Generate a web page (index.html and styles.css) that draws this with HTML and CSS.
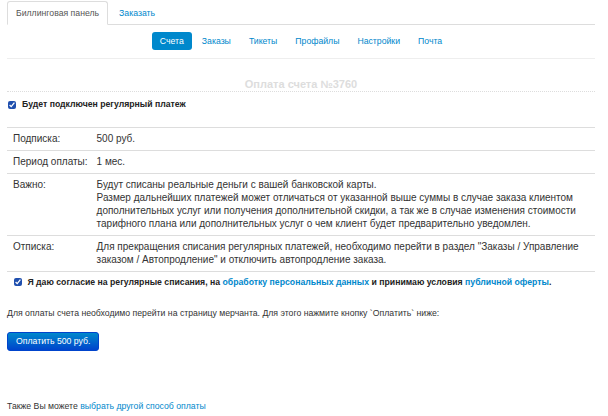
FILE: index.html
```html
<!DOCTYPE html>
<html lang="ru">
<head>
  <meta charset="UTF-8" />
  <meta name="viewport" content="width=device-width, initial-scale=1.0" />
  <title>Оплата счета №3760</title>
  <link rel="stylesheet" href="styles.css">
</head>
<body>
  <div class="page">
    <ul class="tabs">
      <li class="active"><a href="#">Биллинговая панель</a></li>
      <li><a href="#">Заказать</a></li>
    </ul>

    <ul class="pills">
      <li class="active"><a href="#">Счета</a></li>
      <li><a href="#">Заказы</a></li>
      <li><a href="#">Тикеты</a></li>
      <li><a href="#">Профайлы</a></li>
      <li><a href="#">Настройки</a></li>
      <li><a href="#">Почта</a></li>
    </ul>

    <hr class="divider">

    <h3 class="title">Оплата счета №3760</h3>

    <label class="check">
      <input type="checkbox" checked> Будет подключен регулярный платеж
    </label>

    <table class="info">
      <tr>
        <td class="key">Подписка:</td>
        <td>500 руб.</td>
      </tr>
      <tr>
        <td class="key">Период оплаты:</td>
        <td>1 мес.</td>
      </tr>
      <tr>
        <td class="key">Важно:</td>
        <td>Будут списаны реальные деньги с вашей банковской карты.<br>
          Размер дальнейших платежей может отличаться от указанной выше суммы в случае заказа клиентом
          дополнительных услуг или получения дополнительной скидки, а так же в случае изменения стоимости
          тарифного плана или дополнительных услуг о чем клиент будет предварительно уведомлен.</td>
      </tr>
      <tr>
        <td class="key">Отписка:</td>
        <td>Для прекращения списания регулярных платежей, необходимо перейти в раздел "Заказы / Управление
          заказом / Автопродление" и отключить автопродление заказа.</td>
      </tr>
      <tr>
        <td colspan="2" class="consent">
          <label class="check">
            <input type="checkbox" checked> Я даю согласие на регулярные списания, на
            <a href="#">обработку персональных данных</a> и принимаю условия
            <a href="#">публичной оферты</a>.
          </label>
        </td>
      </tr>
    </table>

    <p class="note">Для оплаты счета необходимо перейти на страницу мерчанта. Для этого нажмите кнопку `Оплатить` ниже:</p>

    <button type="button" class="btn-pay">Оплатить 500 руб.</button>

    <p class="other">Также Вы можете <a href="#">выбрать другой способ оплаты</a></p>
  </div>
</body>
</html>
```

FILE: styles.css
```css
body {
  margin: 0;
  background-color: #fff;
  color: #333;
  font-family: "Liberation Sans", Arial, sans-serif;
  font-size: 8.7px;
  line-height: 13px;
}
a {
  color: #0088cc;
  text-decoration: none;
}
.page {
  width: 588px;
  padding: 0 7px;
}
.tabs {
  display: flex;
  gap: 2px;
  list-style: none;
  margin: 1px 0 0;
  padding: 0;
  border-bottom: 1px solid #ddd;
}
.tabs li {
  margin-bottom: -1px;
}
.tabs a {
  display: block;
  padding: 5px 8px 4px;
  border: 1px solid transparent;
  border-radius: 3px 3px 0 0;
}
.tabs .active a {
  color: #555;
  background-color: #fff;
  border-color: #ddd #ddd transparent;
}
.pills {
  display: flex;
  justify-content: center;
  gap: 2px;
  list-style: none;
  margin: 7px 0 0;
  padding: 0;
}
.pills a {
  display: block;
  padding: 3px 8px;
  line-height: 12px;
  border-radius: 3px;
}
.pills .active a {
  color: #fff;
  background-color: #0088cc;
}
.divider {
  margin: 8px 0 0;
  border: 0;
  border-top: 1px solid #eee;
}
.title {
  margin: 19px 0 0;
  font-size: 11px;
  line-height: 13px;
  color: #ddd;
  text-align: center;
  border-bottom: 1px dotted #ddd;
}
.check {
  display: flex;
  align-items: center;
  gap: 6px;
  margin-top: 6px;
  font-weight: bold;
  color: #222;
}
.check input {
  width: 8px;
  height: 8px;
  margin: 0 0 0 1px;
  accent-color: #1f4fae;
}
.info {
  width: 100%;
  margin-top: 16px;
  border-collapse: collapse;
  font-size: 10px;
}
.info td {
  padding: 4px 6px 5px;
  border-top: 1px solid #ddd;
  vertical-align: top;
}
.info .key {
  width: 70px;
  padding-right: 3px;
  white-space: nowrap;
}
.info .consent {
  padding-bottom: 0;
  font-size: 8.7px;
}
.info .consent .check {
  display: block;
  margin: 0;
}
.info .consent input {
  vertical-align: -1px;
  margin-right: 3px;
}
.note {
  margin: 18px 0 0;
}
.btn-pay {
  display: block;
  margin-top: 12px;
  padding: 2px 8px;
  font-family: inherit;
  font-size: 8.7px;
  line-height: 13px;
  color: #fff;
  background-color: #0066cc;
  background-image: linear-gradient(to bottom, #0088cc, #0044cc);
  border: 1px solid #0044cc;
  border-radius: 3px;
  cursor: pointer;
}
.other {
  margin: 49px 0 0;
}
```
